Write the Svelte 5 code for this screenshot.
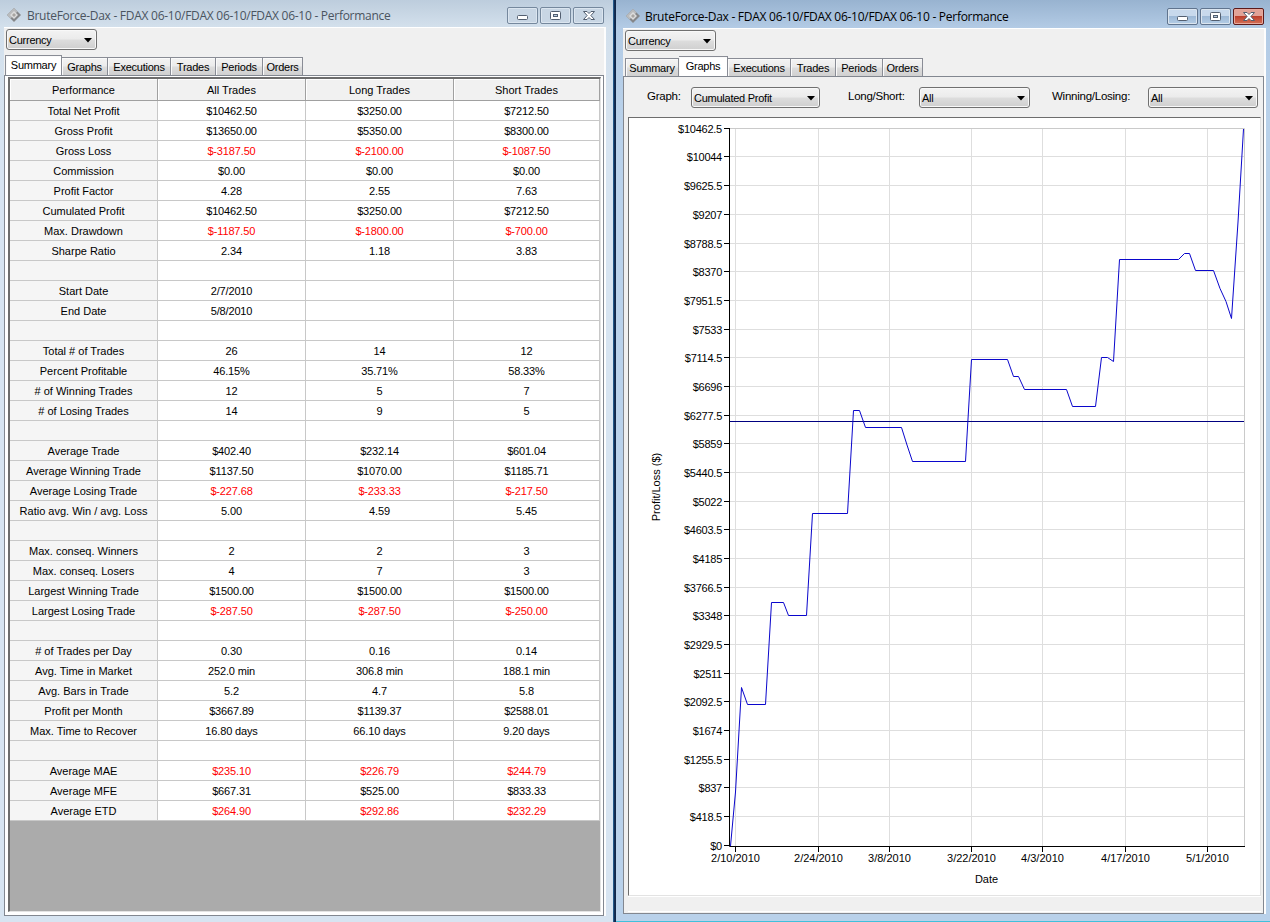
<script lang="ts">
    const title = 'BruteForce-Dax - FDAX 06-10/FDAX 06-10/FDAX 06-10 - Performance';
    const tabs = ['Summary', 'Graphs', 'Executions', 'Trades', 'Periods', 'Orders'];
    const columns = ['Performance', 'All Trades', 'Long Trades', 'Short Trades'];

    let leftTab = $state('Summary');
    let rightTab = $state('Graphs');

    const rows = [
        ['Total Net Profit', '$10462.50', '$3250.00', '$7212.50'],
        ['Gross Profit', '$13650.00', '$5350.00', '$8300.00'],
        ['Gross Loss', '$-3187.50', '$-2100.00', '$-1087.50'],
        ['Commission', '$0.00', '$0.00', '$0.00'],
        ['Profit Factor', '4.28', '2.55', '7.63'],
        ['Cumulated Profit', '$10462.50', '$3250.00', '$7212.50'],
        ['Max. Drawdown', '$-1187.50', '$-1800.00', '$-700.00'],
        ['Sharpe Ratio', '2.34', '1.18', '3.83'],
        ['', '', '', ''],
        ['Start Date', '2/7/2010', '', ''],
        ['End Date', '5/8/2010', '', ''],
        ['', '', '', ''],
        ['Total # of Trades', '26', '14', '12'],
        ['Percent Profitable', '46.15%', '35.71%', '58.33%'],
        ['# of Winning Trades', '12', '5', '7'],
        ['# of Losing Trades', '14', '9', '5'],
        ['', '', '', ''],
        ['Average Trade', '$402.40', '$232.14', '$601.04'],
        ['Average Winning Trade', '$1137.50', '$1070.00', '$1185.71'],
        ['Average Losing Trade', '$-227.68', '$-233.33', '$-217.50'],
        ['Ratio avg. Win / avg. Loss', '5.00', '4.59', '5.45'],
        ['', '', '', ''],
        ['Max. conseq. Winners', '2', '2', '3'],
        ['Max. conseq. Losers', '4', '7', '3'],
        ['Largest Winning Trade', '$1500.00', '$1500.00', '$1500.00'],
        ['Largest Losing Trade', '$-287.50', '$-287.50', '$-250.00'],
        ['', '', '', ''],
        ['# of Trades per Day', '0.30', '0.16', '0.14'],
        ['Avg. Time in Market', '252.0 min', '306.8 min', '188.1 min'],
        ['Avg. Bars in Trade', '5.2', '4.7', '5.8'],
        ['Profit per Month', '$3667.89', '$1139.37', '$2588.01'],
        ['Max. Time to Recover', '16.80 days', '66.10 days', '9.20 days'],
        ['', '', '', ''],
        ['Average MAE', '$235.10', '$226.79', '$244.79'],
        ['Average MFE', '$667.31', '$525.00', '$833.33'],
        ['Average ETD', '$264.90', '$292.86', '$232.29']
    ];

    // MAE and ETD are losses even though they are stored as positive amounts
    function isLoss(row: string[], value: string) {
        return value.startsWith('$-') || row[0] === 'Average MAE' || row[0] === 'Average ETD';
    }

    const yTicks = Array.from({ length: 26 }, (_, i) => ({
        label: '$' + i * 418.5,
        y: Math.floor(845.3 - i * 28.68) + 0.5
    }));

    const xTicks = [
        { label: '2/10/2010', x: 735.5 },
        { label: '2/24/2010', x: 818.5 },
        { label: '3/8/2010', x: 889.5 },
        { label: '3/22/2010', x: 971.5 },
        { label: '4/3/2010', x: 1042.5 },
        { label: '4/17/2010', x: 1125.5 },
        { label: '5/1/2010', x: 1207.5 }
    ];

    const profit = [
        [730.5, 846], [735.5, 792], [741.5, 687.5], [747.5, 704.5], [765.5, 704.5], [771.5, 602.5],
        [783.5, 602.5], [788.5, 615.5], [806.5, 615.5], [812.5, 513.5], [847.5, 513.5], [853.5, 410.5],
        [859.5, 410.5], [865.5, 427.5], [901.5, 427.5], [907, 445], [912.5, 461.5], [965.5, 461.5],
        [971.5, 359.5], [1007.5, 359.5], [1013.5, 376.5], [1018.5, 376.5], [1024.5, 389.5], [1066.5, 389.5],
        [1072.5, 406.5], [1095.5, 406.5], [1101.5, 357.5], [1107.5, 357.5], [1113.5, 361.5], [1119.5, 259.5],
        [1178.5, 259.5], [1184.5, 253.5], [1189.5, 253.5], [1195.5, 270.5], [1213.5, 270.5], [1220, 288.5],
        [1226, 301.5], [1231.5, 318.5], [1238, 222], [1243.5, 129]
    ];
    const line = profit.map((p) => p.join(',')).join(' ');
</script>

{#snippet titleBar()}
    <header class="title-bar">
        <svg class="app-icon" width="16" height="16" viewBox="0 0 16 16">
            <path d="M8 1 L15 8 L8 15 L1 8 Z" fill="#85878a" />
            <path d="M8 1 L11.5 4.5 L4.5 11.5 L1 8 Z" fill="#b9bbbd" />
            <path d="M8 4 L12 8 L8 12 L4 8 Z" fill="#dcdcdc" />
            <path d="M8 6 L10 8 L8 10 L6 8 Z" fill="#a8a5a2" />
        </svg>
        <span class="title">{title}</span>
        <div class="window-buttons">
            <button class="min" aria-label="Minimize">
                <svg width="30" height="15" viewBox="0 0 30 15">
                    <rect x="9.5" y="7.5" width="10" height="4" rx="1" fill="#fff" stroke="#535f70" />
                </svg>
            </button>
            <button class="max" aria-label="Maximize">
                <svg width="30" height="15" viewBox="0 0 30 15">
                    <rect x="9.5" y="3.5" width="10" height="8" rx="1" fill="#fff" stroke="#535f70" />
                    <rect x="12.5" y="6.5" width="4" height="2" fill="#b9cde2" stroke="#535f70" />
                </svg>
            </button>
            <button class="close" aria-label="Close">
                <svg width="30" height="15" viewBox="0 0 30 15">
                    <path d="M9.5 3.5 h3.5 l2 2 l2 -2 h3.5 l-3.6 4 l3.6 4 h-3.5 l-2 -2 l-2 2 h-3.5 l3.6 -4 Z" fill="#fff" stroke="#535f70" />
                </svg>
            </button>
        </div>
    </header>
{/snippet}

{#snippet combo(value: string, size: string)}
    <button class="combo {size}">
        <span>{value}</span>
        <svg width="8" height="5" viewBox="0 0 8 5"><path d="M0 0 H8 L4 4.5 Z" fill="#000" /></svg>
    </button>
{/snippet}

{#snippet tabStrip(active: string, select: (tab: string) => void)}
    <nav class="tabs">
        {#each tabs as tab}
            <button class="tab {tab.toLowerCase()}" class:active={tab === active} onclick={() => select(tab)}>{tab}</button>
        {/each}
    </nav>
{/snippet}

<div class="desktop">
    <section class="window inactive">
        {@render titleBar()}
        <div class="client">
            <div class="toolbar">{@render combo('Currency', 'currency')}</div>
            {@render tabStrip(leftTab, (tab) => (leftTab = tab))}
            <div class="page summary-page">
                <div class="grid-view">
                    <table>
                        <thead>
                            <tr>
                                {#each columns as column}
                                    <th>{column}</th>
                                {/each}
                            </tr>
                        </thead>
                        <tbody>
                            {#each rows as row}
                                <tr>
                                    {#each row as value}
                                        <td class:loss={isLoss(row, value) && value !== row[0]}>{value}</td>
                                    {/each}
                                </tr>
                            {/each}
                        </tbody>
                    </table>
                </div>
            </div>
        </div>
    </section>

    <div class="gap"></div>

    <section class="window focused">
        {@render titleBar()}
        <div class="client">
            <div class="toolbar">{@render combo('Currency', 'currency')}</div>
            {@render tabStrip(rightTab, (tab) => (rightTab = tab))}
            <div class="page graph-page">
                <div class="filters">
                    <span class="label graph">Graph:</span>
                    {@render combo('Cumulated Profit', 'wide')}
                    <span class="label side">Long/Short:</span>
                    {@render combo('All', 'medium')}
                    <span class="label result">Winning/Losing:</span>
                    {@render combo('All', 'last')}
                </div>
                <div class="chart">
                    <svg width="631" height="777" viewBox="629 118 631 777">
                        <g stroke="#dedede">
                            {#each yTicks.slice(1) as tick}
                                <line x1="730" x2="1244" y1={tick.y} y2={tick.y} />
                            {/each}
                            {#each xTicks as tick}
                                <line x1={tick.x} x2={tick.x} y1="129" y2="846" />
                            {/each}
                        </g>
                        <path d="M730 128.5 H1244.5 V846" fill="none" stroke="#cacaca" />

                        <g class="y-labels">
                            {#each yTicks as tick}
                                <line x1="724" x2="730" y1={tick.y} y2={tick.y} stroke="#000" />
                                <text x="722" y={tick.y + 4.5}>{tick.label}</text>
                            {/each}
                        </g>
                        <g class="x-labels">
                            {#each xTicks as tick}
                                <line x1={tick.x} x2={tick.x} y1="846" y2="852" stroke="#000" />
                                <text x={tick.x} y="862">{tick.label}</text>
                            {/each}
                            <text x="986.5" y="883">Date</text>
                            <text transform="translate(659.5 487) rotate(-90)">Profit/Loss ($)</text>
                        </g>

                        <line x1="730" x2="1244" y1="421.5" y2="421.5" stroke="#000080" />
                        <polyline points={line} fill="none" stroke="#0a06cc" />
                        <path d="M729.5 128 V846.5 H1245" fill="none" stroke="#000" />
                    </svg>
                </div>
                <div class="status"></div>
            </div>
        </div>
    </section>
</div>

<style>
    :global(body) {
        overflow: hidden;
    }

    .desktop {
        display: flex;
        width: 1270px;
        height: 922px;
        overflow: hidden;
        font: 11px/13px "Liberation Sans", Arial, sans-serif;
        color: #000;
    }

    .desktop * {
        box-sizing: border-box;
    }

    button {
        font: inherit;
        color: inherit;
        margin: 0;
        padding: 0;
    }

    .gap {
        width: 3px;
        background: linear-gradient(90deg, #2d6fa3, #0b1f45 60%, #122c4c);
    }

    .window {
        display: flex;
        flex-direction: column;
    }

    .inactive {
        width: 613px;
        padding: 0 7px 6px 4px;
        background: linear-gradient(#bdcddd 0, #d3e0ec 27px, #d7e4f1 140px);
    }

    .focused {
        width: 654px;
        padding: 0 4px 7px 7px;
        background: linear-gradient(#98b3d0 0, #b3cbe5 28px, #b9d1ea 120px);
        border-bottom: 1px solid #40c0dc;
    }

    /* title bar */

    .title-bar {
        flex: none;
        display: flex;
        height: 27px;
        padding: 7px 0 0 2px;
    }

    .focused .title-bar {
        height: 28px;
        padding-top: 8px;
    }

    .app-icon {
        flex: none;
    }

    .title {
        flex: 1;
        margin: 0 0 0 5px;
        font: 12px/17px "Open Sans", "Noto Sans", sans-serif;
        letter-spacing: -0.27px;
        white-space: nowrap;
        color: #4a5460;
    }

    .focused .title {
        color: #000;
        margin-left: 4px;
    }

    .window-buttons {
        display: flex;
        gap: 2px;
        margin-right: 2px;
    }

    .window-buttons button {
        width: 31px;
        height: 17px;
        border: 1px solid #75889d;
        border-radius: 2px;
        background: #c8d6e4;
        box-shadow: inset 0 0 0 1px #dbe5ef;
    }

    .window-buttons svg {
        display: block;
    }

    .focused .window-buttons button {
        border-color: #60748e;
        background: linear-gradient(#c8d9ec 45%, #9eb9d6 50%, #b4cde6);
    }

    .focused .window-buttons .close {
        border-color: #5c1a1a;
        background: linear-gradient(#e1a297 45%, #bd3f2c 50%, #d4725a);
        box-shadow: inset 0 0 0 1px #e7a89c;
    }

    /* client area */

    .client {
        flex: 1;
        display: flex;
        flex-direction: column;
        min-height: 0;
        border-top: 1px solid #fff;
        border-right: 2px solid #fdfdfd;
        background: #f0f0f0;
    }

    .toolbar {
        padding: 1px 0 0 2px;
    }

    .combo {
        display: flex;
        align-items: center;
        justify-content: space-between;
        height: 21px;
        padding: 1px 4px 0 2px;
        letter-spacing: -0.25px;
        border: 1px solid #707070;
        border-radius: 3px;
        background: linear-gradient(#f3f3f3, #ebebeb 48%, #dddddd 52%, #cfcfcf);
        box-shadow: inset 0 0 0 1px #f8f8f8;
    }

    .combo.currency {
        width: 91px;
    }

    .combo.wide {
        width: 129px;
    }

    .combo.medium {
        width: 111px;
    }

    .combo.last {
        width: 110px;
    }

    .tabs {
        display: flex;
        align-items: flex-end;
        height: 25px;
        padding-left: 1px;
    }

    .focused .tabs {
        padding-left: 2px;
    }

    .tab {
        height: 18px;
        padding-top: 1px;
        letter-spacing: -0.25px;
        border: 1px solid #898c95;
        border-left-width: 0;
        border-bottom: 0;
        background: linear-gradient(#f3f3f3, #ebebeb 48%, #dddddd 52%, #d0d0d0);
        box-shadow: inset 1px 1px 0 #fafafa;
    }

    .tab:first-child {
        border-left-width: 1px;
    }

    .tab.active {
        height: 21px;
        margin-bottom: -1px;
        padding: 0 0 2px;
        background: #fff;
    }

    .tab.summary { width: 57px; }
    .tab.graphs { width: 46px; }
    .tab.executions { width: 63px; }
    .tab.trades { width: 45px; }
    .tab.periods { width: 47px; }
    .tab.orders { width: 40px; }
    .focused .tab.summary { width: 54px; }
    .focused .tab.graphs { width: 49px; }

    .page {
        flex: 1;
        display: flex;
        flex-direction: column;
        min-height: 0;
        border: 1px solid #828790;
    }

    .summary-page {
        padding: 1px 2px 3px 3px;
        background: #fff;
    }

    .grid-view {
        flex: 1;
        border: 1px solid #e3e3e3;
        border-top: 2px solid #6d6d6d;
        border-left: 2px solid #6d6d6d;
        background: #ababab;
    }

    table {
        width: 100%;
        table-layout: fixed;
        border-collapse: separate;
        border-spacing: 0;
    }

    th, td {
        height: 20px;
        padding: 2px 0 0;
        text-align: center;
        border-right: 1px solid #c8c8c8;
        border-bottom: 1px solid #c8c8c8;
        background: #fff;
    }

    th {
        width: 148px;
        height: 22px;
        font-weight: normal;
        background: #f1f1f1;
        border-color: #a0a0a0;
        box-shadow: inset 1px 1px 0 #fff;
    }

    th:last-child {
        width: auto;
    }

    td {
        letter-spacing: -0.15px;
    }

    td:first-child {
        background: #f5f5f5;
        letter-spacing: 0;
    }

    .loss {
        color: #f00;
    }

    /* graph page */

    .graph-page {
        padding: 0 2px 1px 4px;
    }

    .filters {
        display: flex;
        height: 40px;
        padding-top: 10px;
    }

    .filters .label {
        padding-top: 3px;
        font-size: 11.5px;
        letter-spacing: -0.25px;
    }

    .label.graph { width: 63px; padding-left: 19px; }
    .label.side { width: 99px; padding-left: 28px; }
    .label.result { width: 118px; padding-left: 22px; }

    .chart {
        height: 779px;
        border: 1px solid #e3e3e3;
        border-top: 1px solid #6d6d6d;
        border-left: 1px solid #6d6d6d;
        background: #fff;
    }

    .chart svg {
        display: block;
    }

    .chart text {
        font-size: 11px;
    }

    .y-labels text {
        text-anchor: end;
        letter-spacing: -0.25px;
    }

    .x-labels text {
        text-anchor: middle;
    }

    .status {
        flex: 1;
        border-top: 1px solid #fff;
        border-bottom: 1px solid #fff;
    }
</style>
